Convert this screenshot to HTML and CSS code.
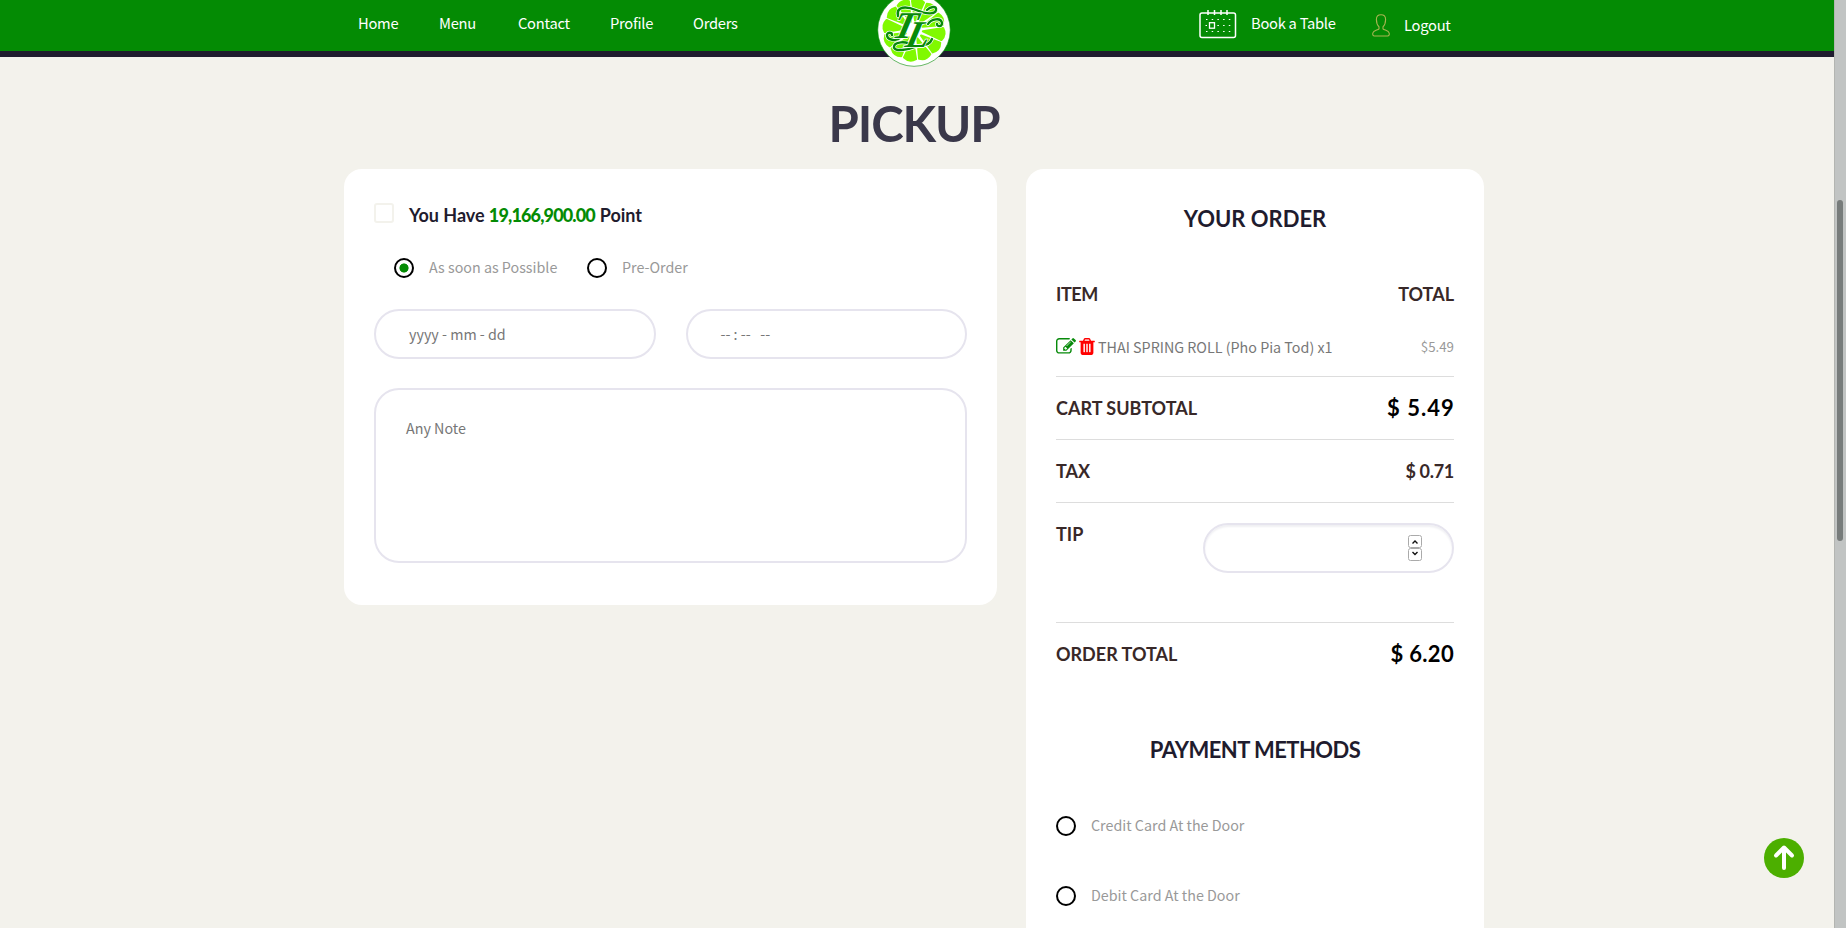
FILE: index.html
```html
<!DOCTYPE html>
<html lang="en">
<head>
<meta charset="utf-8">
<title>Pickup</title>
<link rel="stylesheet" href="styles.css">
</head>
<body>
<header class="header">
  <div class="header-inner">
    <nav class="nav">
      <a class="n-home">Home</a><a class="n-menu">Menu</a><a class="n-contact">Contact</a><a class="n-profile">Profile</a><a class="n-orders">Orders</a>
    </nav>
    <div class="actions">
      <svg class="cal" width="38" height="29" viewBox="0 0 38 29" fill="none" stroke="#fff">
        <rect x="1" y="3" width="35.5" height="24.5" rx="2" stroke-width="1.5"/>
        <path d="M9 0v5M15.500 0v5M22 0v5M28 0v5" stroke-width="1.5"/>
        <path d="M7 9.500h25M7 21.500h25" stroke-dasharray="1.500 4.200"/>
        <path d="M6.500 15.500h3M18.400 15.500h14" stroke-dasharray="1.500 4.200"/>
        <rect x="10.500" y="12.700" width="5" height="5.500" stroke-width="1.300"/>
      </svg>
      <a class="book">Book a Table</a>
      <svg class="user" width="18" height="23" viewBox="0 0 18 23" fill="none" stroke="#a9b552" stroke-width="1.100">
        <path d="M9 .700C5.800.700 4.400 2.600 4.400 5.400c0 3.600 1.200 6 2.600 7.400v2c-1.200 1.400-5.600 1.400-6.200 4.200-.300 2 .300 3 1.600 3h13.200c1.300 0 1.900-1 1.600-3-.600-2.800-5-2.800-6.200-4.200v-2c1.400-1.400 2.600-3.800 2.600-7.400C13.600 2.600 12.200.700 9 .700z"/>
      </svg>
      <a class="logout">Logout</a>
    </div>
  </div>
  <svg class="logo" width="74" height="74" viewBox="-37 -37 74 74">
    <defs><path id="slice" d="M0-9L6-28.500Q0-33-6-28.500Z" fill="#80f900" stroke="#80f900" stroke-width="2.200" stroke-linejoin="round"/></defs>
    <circle r="36.300" fill="#fff" stroke="#048b04" stroke-width=".6"/>
    <g>
      <use href="#slice" transform="rotate(8)"/><use href="#slice" transform="rotate(38)"/><use href="#slice" transform="rotate(68)"/><use href="#slice" transform="rotate(98)"/>
      <use href="#slice" transform="rotate(128)"/><use href="#slice" transform="rotate(158)"/><use href="#slice" transform="rotate(188)"/><use href="#slice" transform="rotate(218)"/>
      <use href="#slice" transform="rotate(248)"/><use href="#slice" transform="rotate(278)"/><use href="#slice" transform="rotate(308)"/><use href="#slice" transform="rotate(338)"/>
    </g>
    <g fill="none" stroke-linecap="round">
      <g stroke="#fff" stroke-width="3.800">
        <path d="M-16-14C-18-24-8-24 2-20S21-15 22-20S16-23 13-20"/>
        <path d="M-13 7C-18 12-27 10-27 5c0-3 5-3 5 0"/>
        <path d="M14-6C17-11 27-13 28-7c0 4-5 4-5 1"/>
        <path d="M-1 16C-8 10-20 12-20 17S-6 20 1 17S15 17 18 9"/>
      </g>
      <g stroke="#078a0a" stroke-width="2.400">
        <path d="M-16-14C-18-24-8-24 2-20S21-15 22-20S16-23 13-20"/>
        <path d="M-13 7C-18 12-27 10-27 5c0-3 5-3 5 0"/>
        <path d="M14-6C17-11 27-13 28-7c0 4-5 4-5 1"/>
        <path d="M-1 16C-8 10-20 12-20 17S-6 20 1 17S15 17 18 9"/>
      </g>
    </g>
    <text class="monogram" transform="skewX(-14)" x="-21" y="8">T<tspan dx="-8" dy="9">L</tspan></text>
  </svg>
</header>
<main class="page">
  <h1 class="title">PICKUP</h1>
  <div class="columns">
    <section class="card form">
      <div class="points"><span class="check"></span><span class="points-text">You Have <b>19,166,900.00</b> Point</span></div>
      <div class="when">
        <span class="radio on"></span><span class="label asap">As soon as Possible</span>
        <span class="radio"></span><span class="label">Pre-Order</span>
      </div>
      <div class="fields">
        <div class="field">yyyy - mm - dd</div>
        <div class="field">-- : --&nbsp;&nbsp; --</div>
      </div>
      <div class="note">Any Note</div>
    </section>
    <section class="card order">
      <h2 class="your">YOUR ORDER</h2>
      <div class="row head"><span class="item-head">ITEM</span><span>TOTAL</span></div>
      <div class="row item">
        <span class="item-name">
          <svg width="20" height="17" viewBox="0 128 1792 1536" preserveAspectRatio="none" fill="#078a0a"><path d="M888 1184l116-116-152-152-116 116v56h96v96h56zm440-720q-16-16-33 1l-350 350q-17 17-1 33t33-1l350-350q17-17 1-33zm80 594v190q0 119-84.500 203.500t-203.500 84.500h-832q-119 0-203.500-84.500t-84.500-203.500v-832q0-119 84.500-203.500t203.500-84.500h832q63 0 117 25 15 7 18 23 3 17-9 29l-49 49q-14 14-32 8-23-6-45-6h-832q-66 0-113 47t-47 113v832q0 66 47 113t113 47h832q66 0 113-47t47-113v-126q0-13 9-22l64-64q15-15 35-7t20 29zm-96-738l288 288-672 672h-288v-288zm444 132l-92 92-288-288 92-92q28-28 68-28t68 28l152 152q28 28 28 68t-28 68z"/></svg>
          <svg class="trash" width="16" height="17" viewBox="192 128 1408 1536" fill="#f00"><path d="M704 1376v-704q0-14-9-23t-23-9h-64q-14 0-23 9t-9 23v704q0 14 9 23t23 9h64q14 0 23-9t9-23zm256 0v-704q0-14-9-23t-23-9h-64q-14 0-23 9t-9 23v704q0 14 9 23t23 9h64q14 0 23-9t9-23zm256 0v-704q0-14-9-23t-23-9h-64q-14 0-23 9t-9 23v704q0 14 9 23t23 9h64q14 0 23-9t9-23zm-544-992h448l-48-117q-7-9-17-11h-317q-10 2-17 11zm928 32v64q0 14-9 23t-23 9h-96v948q0 83-47 143.500t-113 60.500h-832q-66 0-113-58.500t-47-141.500v-952h-96q-14 0-23-9t-9-23v-64q0-14 9-23t23-9h309l70-167q15-37 54-63t79-26h320q40 0 79 26t54 63l70 167h309q14 0 23 9t9 23z"/></svg>
          <span>THAI SPRING ROLL (Pho Pia Tod) x1</span>
        </span>
        <span class="price">$5.49</span>
      </div>
      <div class="row"><span>CART SUBTOTAL</span><span class="big wide">$ 5.49</span></div>
      <div class="row"><span>TAX</span><span class="tax">$ 0.71</span></div>
      <div class="row tip"><span>TIP</span>
        <div class="tip-input">
          <svg width="14" height="26" viewBox="0 0 14 26" fill="none">
            <rect x=".5" y=".5" width="13" height="12" rx="2" stroke="#aaa"/><rect x=".5" y="13.500" width="13" height="12" rx="2" stroke="#aaa"/>
            <path d="M4.500 8.500L7 6l2.500 2.500M4.500 17L7 19.500 9.500 17" stroke="#111" stroke-width="1.400"/>
          </svg>
        </div>
      </div>
      <div class="row last"><span>ORDER TOTAL</span><span class="big total">$ 6.20</span></div>
      <h2 class="payment">PAYMENT METHODS</h2>
      <div class="pay"><span class="radio"></span><span class="label">Credit Card At the Door</span></div>
      <div class="pay"><span class="radio"></span><span class="label">Debit Card At the Door</span></div>
    </section>
  </div>
</main>
<svg class="to-top" width="40" height="40" viewBox="0 0 40 40"><circle cx="20" cy="20" r="20" fill="#4caf00"/><path d="M20 30V10.500M12 17.500L20 9.500L28 17.500" fill="none" stroke="#fff" stroke-width="4" stroke-linecap="round" stroke-linejoin="round"/></svg>
<div class="scrollbar"><div class="thumb"></div></div>
</body>
</html>
```
FILE: styles.css
```css
* { box-sizing: border-box; }
body {
  margin: 0;
  height: 928px;
  overflow: hidden;
  padding-right: 12px;
  background: #f3f2ec;
  font-family: "Noto Sans CJK SC", "Noto Sans", sans-serif;
  font-size: 14.3px;
}
svg { display: block; flex: none; }
.header {
  position: relative;
  height: 57px;
  background: #048b04;
  border-bottom: 6px solid #1f1c2e;
}
.header-inner {
  width: 1140px;
  margin-left: 344px;
  display: flex;
  justify-content: space-between;
  color: #fff;
  font-size: 14.7px;
  letter-spacing: -.25px;
  line-height: 45px;
}
.nav { display: flex; padding-left: 14px; }
.n-home { width: 81px; }
.n-menu { width: 79px; }
.n-contact { width: 92px; }
.n-profile { width: 83px; }
.actions { display: flex; width: 285px; }
.cal { margin: 10px 14px 0 0; }
.book { width: 121px; }
.user { margin: 14px 14px 0 0; }
.logout { padding-top: 2px; }
.logo { position: absolute; left: 877px; top: -7px; }
.monogram {
  font: italic bold 38px "Liberation Serif", serif;
  fill: #078a0a;
  stroke: #fff;
  stroke-width: 1.4px;
  paint-order: stroke;
}
.title {
  margin: 20px 0 0;
  padding-right: 6px;
  height: 92px;
  line-height: 92px;
  text-align: center;
  font-family: Lato, sans-serif;
  font-size: 49px;
  letter-spacing: -1.1px;
  color: #3a384a;
}
.columns { display: flex; gap: 29px; margin-left: 344px; align-items: flex-start; }
.card { background: #fff; border-radius: 18px; padding: 30px; }
.form { width: 653px; height: 436px; }
.order { width: 458px; height: 800px; }
.points { display: flex; align-items: center; height: 30px; font: bold 18px/30px Lato, sans-serif; color: #1f1c2e; }
.points-text { padding-top: 2px; letter-spacing: -.05px; }
.points b { color: #048b04; letter-spacing: -.85px; margin-right: .5px; }
.check { width: 20px; height: 20px; margin: -2px 15px 0 0; border: 2px solid #f3f2ec; border-radius: 3px; }
.when { display: flex; align-items: center; height: 40px; margin: 19px 0 21px; padding-left: 20px; }
.radio { width: 20px; height: 20px; flex: none; border: 2px solid #000; border-radius: 50%; margin-right: 15px; }
.on { background: radial-gradient(circle, #048b04 4.2px, #fff 4.900px); }
.label { color: #999; line-height: 22px; margin-top: -2px; }
.asap { width: 158px; }
.fields { display: flex; gap: 30px; }
.field { flex: 1; height: 50px; line-height: 46px; padding-left: 33px; border: 2px solid #e6e4ee; border-radius: 25px; color: #777; }
.note { height: 175px; margin-top: 29px; padding: 27px 30px; line-height: 22px; border: 2px solid #e6e4ee; border-radius: 25px; color: #777; }
h2 { margin: 0; text-align: center; font: bold 22px/39px Lato, sans-serif; color: #1f1c2e; }
.row { display: flex; justify-content: space-between; height: 63px; border-bottom: 1px solid #ddd; font: bold 18px/63px Lato, sans-serif; color: #382828; }
.head { height: 40px; line-height: 41px; margin-top: 36px; border: 0; }
.item-head { letter-spacing: -.4px; }
.item { padding-top: 18px; font: 14.3px/30px "Noto Sans CJK SC", sans-serif; color: #777; }
.item-name { display: flex; }
.item-name svg { margin-top: 6px; }
.item-name .trash { margin: 6px 2px 0 3px; }
.item-name span { padding-left: 1px; }
.price { font-size: 13.3px; color: #999; }
.big { font-size: 22px; line-height: 62px; color: #000; }
.wide { letter-spacing: 1px; margin-right: -.7px; }
.total { letter-spacing: .3px; }
.tax { letter-spacing: -.3px; }
.tip { height: 120px; }
.tip-input { width: 251px; height: 50px; margin-top: 20px; padding: 10px 30px; border: 2px solid #e6e4ee; border-radius: 25px; box-shadow: inset 0 2px 2px #f0f0f3; display: flex; justify-content: flex-end; }
.last { border: 0; height: 62px; }
.payment { margin: 45px 0 22px; letter-spacing: -.55px; }
.pay { display: flex; align-items: center; height: 70px; }
.to-top { position: fixed; left: 1764px; top: 838px; }
.scrollbar { position: fixed; right: 0; top: 0; width: 12px; height: 100%; background: #c1c4c3; border-left: 1px solid #b3b5b1; padding: 200px 0 0 2px; }
.thumb { width: 6px; height: 341px; border-radius: 3px; background: #777c7b; }
```
